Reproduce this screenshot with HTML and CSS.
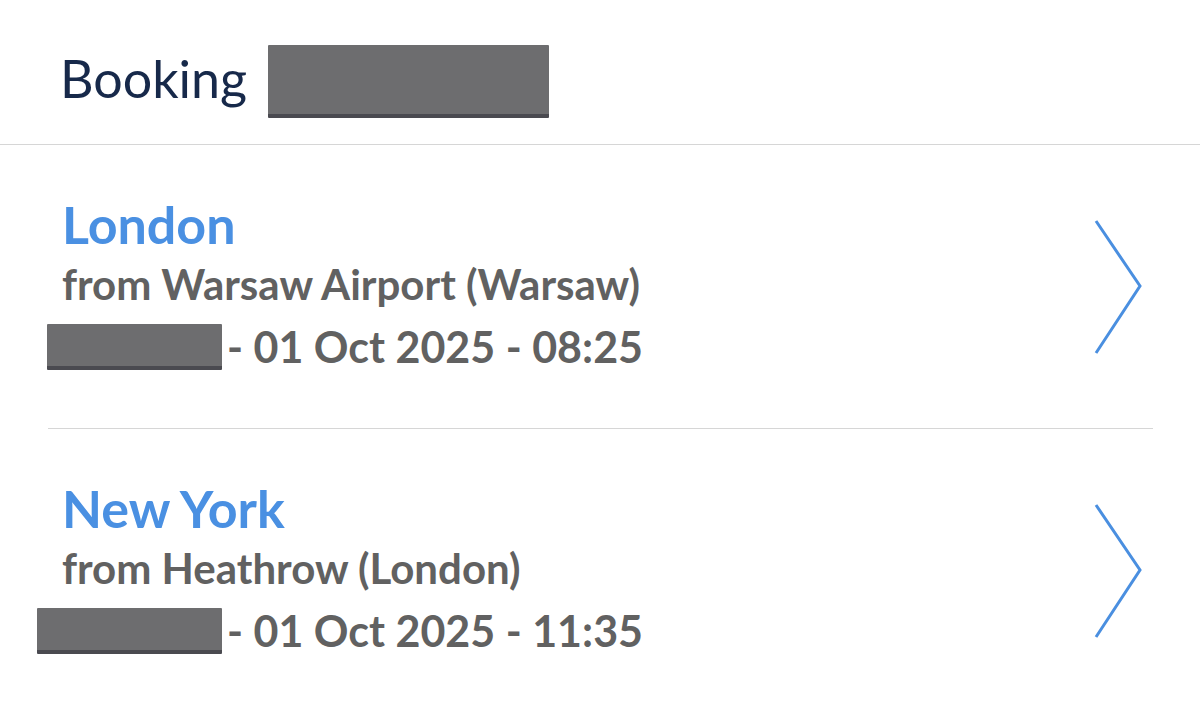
FILE: index.html
```html
<!DOCTYPE html>
<html>
<head>
<meta charset="utf-8">
<link rel="stylesheet" href="styles.css">
</head>
<body>
<header class="header">
  <h1 class="title">Booking <span class="redact redact-title"></span></h1>
</header>
<ul class="list">
  <li class="item">
    <div class="info">
      <div class="city">London</div>
      <div class="from">from Warsaw Airport (Warsaw)</div>
      <div class="date"><span class="redact redact-date"></span>- 01 Oct 2025 - 08:25</div>
    </div>
    <svg class="chev" width="50" height="136" viewBox="0 0 50 136"><polyline points="3,2 47,67 3,134" fill="none" stroke="#4a8fe0" stroke-width="3"/></svg>
  </li>
  <li class="item">
    <div class="info">
      <div class="city">New York</div>
      <div class="from">from Heathrow (London)</div>
      <div class="date"><span class="redact redact-date2"></span>- 01 Oct 2025 - 11:35</div>
    </div>
    <svg class="chev" width="50" height="136" viewBox="0 0 50 136"><polyline points="3,2 47,67 3,134" fill="none" stroke="#4a8fe0" stroke-width="3"/></svg>
  </li>
</ul>
</body>
</html>
```
FILE: styles.css
```css
* { box-sizing: border-box; }
body {
  margin: 0;
  background: #ffffff;
  font-family: Lato, "Open Sans", sans-serif;
  width: 1200px;
  height: 701px;
  overflow: hidden;
}
.header {
  height: 145px;
  border-bottom: 1px solid #d6d6d6;
  padding-left: 60px;
  padding-top: 43px;
}
.title {
  margin: 0;
  font-size: 52px;
  font-weight: 400;
  color: #17294a;
  line-height: 70px;
  white-space: nowrap;
}
.redact {
  display: inline-block;
  background: #6d6d6f;
  border-bottom: 4px solid #4a4a50;
  border-radius: 1px;
}
.redact-title {
  width: 281px;
  height: 73px;
  margin-left: 8px;
  vertical-align: top;
  position: relative;
  top: 2px;
}
.list {
  list-style: none;
  margin: 0;
  padding: 0 47px 0 48px;
}
.item {
  display: flex;
  align-items: center;
  justify-content: space-between;
  height: 284px;
  border-bottom: 1px solid #d6d6d6;
  padding-left: 14px;
  padding-right: 10px;
}
.item:last-child { border-bottom: none; }
.info {
  display: flex;
  flex-direction: column;
}
.city {
  font-size: 52px;
  font-weight: 700;
  color: #4a90e2;
  line-height: 58px;
}
.from {
  font-size: 42px;
  font-weight: 700;
  color: #616161;
  line-height: 62px;
}
.date {
  font-size: 43px;
  font-weight: 700;
  color: #616161;
  line-height: 64px;
  display: flex;
  align-items: center;
}
.redact-date {
  width: 175px;
  height: 46px;
  margin-left: -15px;
  margin-right: 5px;
}
.redact-date2 {
  width: 185px;
  height: 46px;
  margin-left: -25px;
  margin-right: 5px;
}
.chev { flex: none; }
```
